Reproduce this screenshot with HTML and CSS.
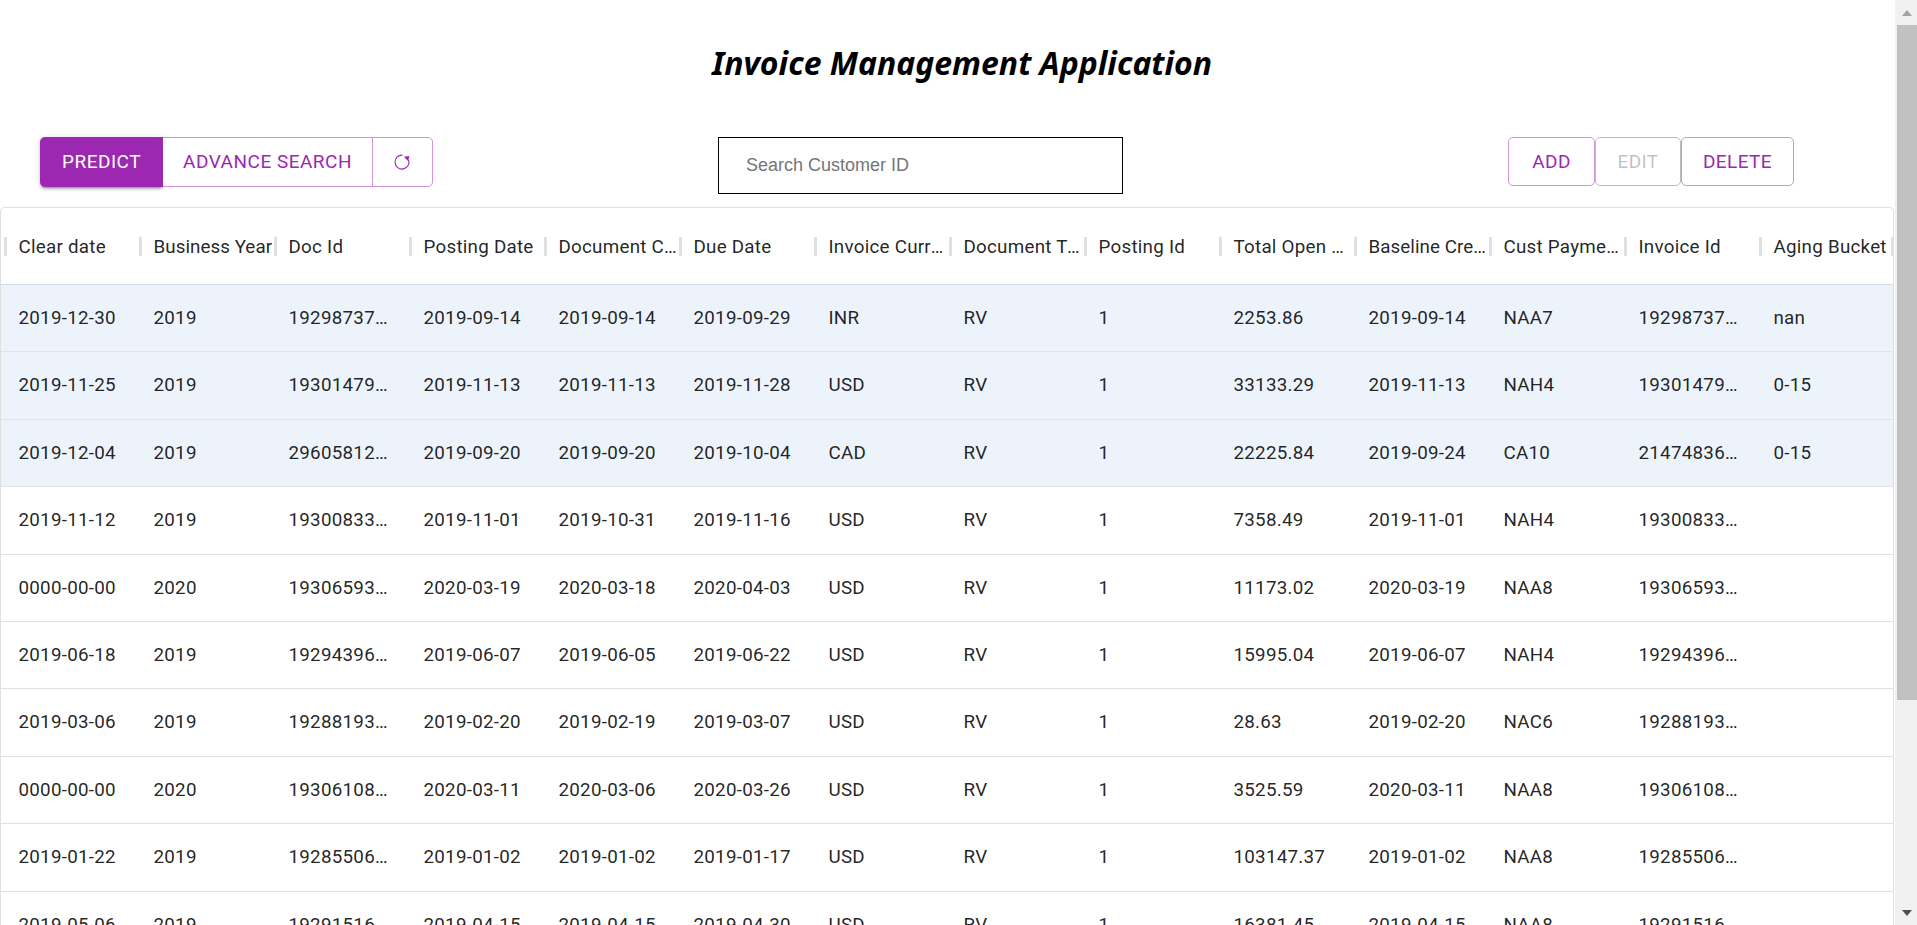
FILE: index.html
```html
<!DOCTYPE html>
<html lang="en">
<head>
<meta charset="utf-8">
<title>Invoice Management Application</title>
<link rel="stylesheet" href="styles.css">
</head>
<body>
<main class="page">
  <h1 class="title">Invoice Management Application</h1>
  <section class="toolbar">
    <div class="btn-group">
      <button class="btn btn-primary">PREDICT</button>
      <button class="btn btn-outline btn-mid">ADVANCE SEARCH</button>
      <button class="btn btn-outline btn-icon" aria-label="Refresh">
        <svg class="refresh" viewBox="0 0 16 16" width="18" height="18"><path d="M13.8 6A6.2 6.2 0 1 1 8.4 1.9" fill="none" stroke="currentColor" stroke-width="1"/><path d="M9.6 3.4 14.6 2.6 13.4 7Z" fill="currentColor"/></svg>
      </button>
    </div>
    <input class="search" type="text" placeholder="Search Customer ID">
    <div class="actions">
      <button class="btn btn-outline btn-action btn-add">ADD</button>
      <button class="btn btn-disabled btn-action btn-edit" disabled>EDIT</button>
      <button class="btn btn-outline btn-action btn-delete">DELETE</button>
    </div>
  </section>
  <section class="grid">
    <div class="row head">
      <div class="cell">Clear date</div><div class="cell cell-tight">Business Year</div><div class="cell">Doc Id</div><div class="cell">Posting Date</div><div class="cell">Document Create Date</div><div class="cell">Due Date</div><div class="cell">Invoice Currency</div><div class="cell">Document Type</div><div class="cell">Posting Id</div><div class="cell">Total Open Amount</div><div class="cell cell-tight">Baseline Create Date</div><div class="cell">Cust Payment Terms</div><div class="cell">Invoice Id</div><div class="cell">Aging Bucket</div>
    </div>
    <div class="row selected">
      <div class="cell">2019-12-30</div><div class="cell">2019</div><div class="cell">1929873765</div><div class="cell">2019-09-14</div><div class="cell">2019-09-14</div><div class="cell">2019-09-29</div><div class="cell">INR</div><div class="cell">RV</div><div class="cell">1</div><div class="cell">2253.86</div><div class="cell">2019-09-14</div><div class="cell">NAA7</div><div class="cell">1929873765</div><div class="cell">nan</div>
    </div>
    <div class="row selected">
      <div class="cell">2019-11-25</div><div class="cell">2019</div><div class="cell">1930147974</div><div class="cell">2019-11-13</div><div class="cell">2019-11-13</div><div class="cell">2019-11-28</div><div class="cell">USD</div><div class="cell">RV</div><div class="cell">1</div><div class="cell">33133.29</div><div class="cell">2019-11-13</div><div class="cell">NAH4</div><div class="cell">1930147974</div><div class="cell">0-15</div>
    </div>
    <div class="row selected">
      <div class="cell">2019-12-04</div><div class="cell">2019</div><div class="cell">2960581231</div><div class="cell">2019-09-20</div><div class="cell">2019-09-20</div><div class="cell">2019-10-04</div><div class="cell">CAD</div><div class="cell">RV</div><div class="cell">1</div><div class="cell">22225.84</div><div class="cell">2019-09-24</div><div class="cell">CA10</div><div class="cell">2147483647</div><div class="cell">0-15</div>
    </div>
    <div class="row">
      <div class="cell">2019-11-12</div><div class="cell">2019</div><div class="cell">1930083328</div><div class="cell">2019-11-01</div><div class="cell">2019-10-31</div><div class="cell">2019-11-16</div><div class="cell">USD</div><div class="cell">RV</div><div class="cell">1</div><div class="cell">7358.49</div><div class="cell">2019-11-01</div><div class="cell">NAH4</div><div class="cell">1930083328</div><div class="cell"></div>
    </div>
    <div class="row">
      <div class="cell">0000-00-00</div><div class="cell">2020</div><div class="cell">1930659387</div><div class="cell">2020-03-19</div><div class="cell">2020-03-18</div><div class="cell">2020-04-03</div><div class="cell">USD</div><div class="cell">RV</div><div class="cell">1</div><div class="cell">11173.02</div><div class="cell">2020-03-19</div><div class="cell">NAA8</div><div class="cell">1930659387</div><div class="cell"></div>
    </div>
    <div class="row">
      <div class="cell">2019-06-18</div><div class="cell">2019</div><div class="cell">1929439637</div><div class="cell">2019-06-07</div><div class="cell">2019-06-05</div><div class="cell">2019-06-22</div><div class="cell">USD</div><div class="cell">RV</div><div class="cell">1</div><div class="cell">15995.04</div><div class="cell">2019-06-07</div><div class="cell">NAH4</div><div class="cell">1929439637</div><div class="cell"></div>
    </div>
    <div class="row">
      <div class="cell">2019-03-06</div><div class="cell">2019</div><div class="cell">1928819371</div><div class="cell">2019-02-20</div><div class="cell">2019-02-19</div><div class="cell">2019-03-07</div><div class="cell">USD</div><div class="cell">RV</div><div class="cell">1</div><div class="cell">28.63</div><div class="cell">2019-02-20</div><div class="cell">NAC6</div><div class="cell">1928819371</div><div class="cell"></div>
    </div>
    <div class="row">
      <div class="cell">0000-00-00</div><div class="cell">2020</div><div class="cell">1930610806</div><div class="cell">2020-03-11</div><div class="cell">2020-03-06</div><div class="cell">2020-03-26</div><div class="cell">USD</div><div class="cell">RV</div><div class="cell">1</div><div class="cell">3525.59</div><div class="cell">2020-03-11</div><div class="cell">NAA8</div><div class="cell">1930610806</div><div class="cell"></div>
    </div>
    <div class="row">
      <div class="cell">2019-01-22</div><div class="cell">2019</div><div class="cell">1928550621</div><div class="cell">2019-01-02</div><div class="cell">2019-01-02</div><div class="cell">2019-01-17</div><div class="cell">USD</div><div class="cell">RV</div><div class="cell">1</div><div class="cell">103147.37</div><div class="cell">2019-01-02</div><div class="cell">NAA8</div><div class="cell">1928550621</div><div class="cell"></div>
    </div>
    <div class="row">
      <div class="cell">2019-05-06</div><div class="cell">2019</div><div class="cell">1929151642</div><div class="cell">2019-04-15</div><div class="cell">2019-04-15</div><div class="cell">2019-04-30</div><div class="cell">USD</div><div class="cell">RV</div><div class="cell">1</div><div class="cell">16381.45</div><div class="cell">2019-04-15</div><div class="cell">NAA8</div><div class="cell">1929151642</div><div class="cell"></div>
    </div>
  </section>
</main>
<aside class="scrollbar" aria-hidden="true">
  <div class="sb-btn"><span class="arrow-up"></span></div>
  <div class="sb-thumb"></div>
  <div class="sb-space"></div>
  <div class="sb-btn"><span class="arrow-down"></span></div>
</aside>
</body>
</html>
```
FILE: styles.css
```css
* { box-sizing: border-box; }
html, body { height: 100%; margin: 0; }
body {
  display: flex;
  overflow: hidden;
  background: #fff;
  font-family: Roboto, "Liberation Sans", sans-serif;
  color: rgba(0, 0, 0, 0.87);
}
.page { width: 1895px; flex: none; height: 925px; overflow: hidden; }

.title {
  margin: 0;
  padding: 45px 0 0 29px;
  height: 137px;
  text-align: center;
  font-family: "Noto Sans", "Open Sans", sans-serif;
  font-size: 32px;
  line-height: 36px;
  font-weight: 700;
  font-style: italic;
  color: #000;
}

.toolbar { display: flex; align-items: flex-start; height: 70px; padding-left: 40px; }
.btn-group { display: flex; height: 50px; }
.btn {
  font-family: Roboto, sans-serif;
  font-size: 19px;
  font-weight: 400;
  letter-spacing: 0.5px;
  background: #fff;
  padding: 0 0 2px;
  margin: 0;
  cursor: pointer;
}
.btn-primary {
  width: 123px;
  background: #9c27b0;
  color: #fff;
  border: 0;
  border-radius: 5px 0 0 5px;
  box-shadow: 0 3px 2px -2px rgba(0,0,0,.25), 0 2px 3px rgba(0,0,0,.18), 0 1px 6px rgba(0,0,0,.12);
}
.btn-outline { color: #9c27b0; border: 1.3px solid #d193dc; }
.btn-mid { width: 209px; border-left: 0; border-right: 0; }
.btn-icon {
  width: 61px;
  border-radius: 0 5px 5px 0;
  display: flex;
  align-items: center;
  justify-content: center;
  padding: 0 1px 0 0;
}
.refresh { display: block; }

.search {
  margin: 0 0 0 285px;
  width: 405px;
  height: 57px;
  padding: 0 27px 1px;
  border: 1.5px solid #000;
  border-radius: 0;
  outline: 0;
  font-family: "Liberation Sans", Arial, sans-serif;
  font-size: 18px;
  background: #fff;
}
.search::placeholder { color: #757575; opacity: 1; }

.actions { display: flex; margin-left: 385px; height: 49px; }
.btn-action { height: 49px; padding: 0; border-radius: 5px; letter-spacing: 0.4px; }
.btn-add { width: 87px; }
.btn-edit { width: 86px; }
.btn-delete { width: 113px; }
.btn-disabled { color: rgba(0,0,0,.26); border: 1.3px solid #bdbdbd; }

.grid {
  height: 720px;
  width: 1894px;
  border: 1.3px solid #e0e0e0;
  border-bottom: 0;
  border-radius: 5px 5px 0 0;
  overflow: hidden;
  font-size: 18.8px;
  letter-spacing: 0.25px;
}
.row {
  display: grid;
  grid-template-columns: repeat(14, 135px);
  height: 67.4px;
  padding-left: 3px;
  border-bottom: 1.3px solid #e0e0e0;
}
.row.selected { background: #edf3fb; border-bottom-color: #dfe4ea; }
.head { height: 77px; border-bottom-color: #d3dbe4; }
.cell {
  position: relative;
  padding: 0 16px 0 14.5px;
  line-height: 66px;
  white-space: nowrap;
  overflow: hidden;
  text-overflow: ellipsis;
}
.head .cell { line-height: 78px; padding-right: 1px; }
.head .cell-tight { padding-right: 0; letter-spacing: 0.05px; }
.head .cell::before {
  content: "";
  position: absolute;
  left: 0;
  top: 29px;
  width: 3px;
  height: 19px;
  background: #e0e0e0;
}
.head .cell:last-child::after {
  content: "";
  position: absolute;
  right: 0;
  top: 29px;
  width: 3px;
  height: 19px;
  background: #e0e0e0;
}

.scrollbar {
  width: 22px;
  flex: none;
  height: 925px;
  display: flex;
  flex-direction: column;
  background: #f1f1f1;
  padding-left: 2px;
}
.sb-btn { height: 25px; flex: none; display: flex; align-items: center; justify-content: center; }
.sb-thumb { height: 675px; flex: none; background: #c1c1c1; }
.sb-space { flex: 1; }
.arrow-up, .arrow-down { width: 0; height: 0; border-left: 5.5px solid transparent; border-right: 5.5px solid transparent; }
.arrow-up { border-bottom: 6px solid #a3a3a3; }
.arrow-down { border-top: 6px solid #505050; }
```
